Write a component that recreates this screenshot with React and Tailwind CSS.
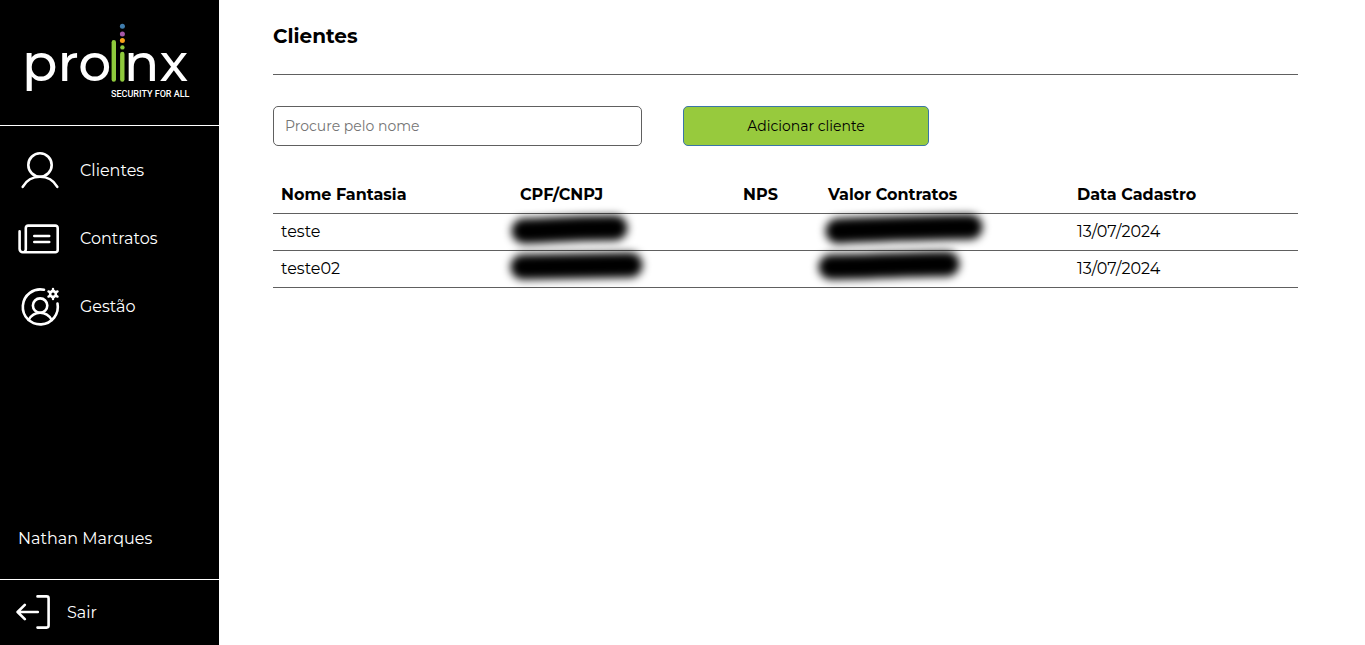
import React from "react";

const navItems = [
  { label: "Clientes", Icon: UserIcon },
  { label: "Contratos", Icon: ContractIcon },
  { label: "Gestão", Icon: ManagementIcon },
];

const columns = [
  { label: "Nome Fantasia", width: "w-[239px]" },
  { label: "CPF/CNPJ", width: "w-[223px]" },
  { label: "NPS", width: "w-[85px]" },
  { label: "Valor Contratos", width: "w-[249px]" },
  { label: "Data Cadastro", width: "w-[229px]" },
];

const clients = [
  {
    name: "teste",
    document: "M28 25 C50 25 66 22 119 22",
    value: "M34 25 C70 23 100 22 166 21",
    date: "13/07/2024",
  },
  {
    name: "teste02",
    document: "M27 24 L134 22",
    value: "M27 24 C66 24 100 21 143 21",
    date: "13/07/2024",
  },
];

function Logo() {
  return (
    <svg
      width="168"
      height="78"
      viewBox="25 22 168 78"
      className="overflow-visible"
      role="img"
      aria-label="prolinx security for all"
    >
      <g fill="#fff" fontFamily="Montserrat, Inter, sans-serif" fontSize="52" fontWeight="500">
        <text x="22" y="81">pro</text>
        <text x="124" y="81">nx</text>
      </g>
      <g stroke="#8fca3c" strokeWidth="4.4" strokeLinecap="round">
        <line x1="113.8" y1="42.3" x2="113.8" y2="79.5" />
        <line x1="122.3" y1="54" x2="122.3" y2="79.5" />
      </g>
      <circle cx="122.4" cy="26.2" r="2.5" fill="#3f7cac" />
      <circle cx="122.4" cy="33.9" r="2.5" fill="#a657a8" />
      <circle cx="122.4" cy="40.6" r="2.5" fill="#f9a11b" />
      <circle cx="122.4" cy="47.4" r="2.2" fill="#8fca3c" />
      <text x="111" y="97" fill="#fff" fontFamily="Roboto, sans-serif" fontSize="9" fontWeight="500">
        SECURITY FOR ALL
      </text>
    </svg>
  );
}

function LineIcon({ size, children }) {
  return (
    <svg
      width={size}
      height={size}
      viewBox={`0 0 ${size} ${size}`}
      fill="none"
      stroke="currentColor"
      strokeWidth="2.6"
      strokeLinecap="round"
      strokeLinejoin="round"
      className="shrink-0"
      aria-hidden="true"
    >
      {children}
    </svg>
  );
}

function UserIcon() {
  return (
    <LineIcon size={44}>
      <circle cx="22" cy="17" r="11.7" />
      <path d="M4.7 38.8 C8.2 32.8 14.5 28.8 22 28.8 S35.8 32.8 39.3 38.8" />
    </LineIcon>
  );
}

function ContractIcon() {
  return (
    <LineIcon size={44}>
      <path d="M1.6 15.4 V33 A3.2 3.2 0 0 0 4.8 36.2 H37.4 A2.3 2.3 0 0 0 39.7 33.9 V11.9 A2.3 2.3 0 0 0 37.4 9.6 H10.1 A2.3 2.3 0 0 0 7.8 11.9 V33.2 A3 3 0 0 1 4.8 36.2" />
      <path d="M16.3 20 H31.2 M16.3 26 H31.2" />
    </LineIcon>
  );
}

function ManagementIcon() {
  return (
    <LineIcon size={44}>
      <path d="M26 5.8 A17.5 17.5 0 1 0 39.5 19.6" />
      <circle cx="22.1" cy="21.6" r="7.2" />
      <path d="M10.6 36 C13 31.6 17 28.8 22.1 28.8 S31.3 31.6 33.7 36" />
      <circle cx="35" cy="10" r="2.9" strokeWidth="2.6" />
      <path
        strokeWidth="2.4"
        d="M35 6.5 V5 M35 13.5 V15 M38 8.3 L39.5 7.4 M38 11.7 L39.5 12.6 M32 8.3 L30.5 7.4 M32 11.7 L30.5 12.6"
      />
    </LineIcon>
  );
}

function ExitIcon() {
  return (
    <LineIcon size={34}>
      <path d="M21.5 1.4 H30.6 A2 2 0 0 1 32.6 3.4 V30.6 A2 2 0 0 1 30.6 32.6 H21.5" />
      <path d="M21.8 17 H1.8 M8.8 9.8 L1.6 17 L8.8 24.2" />
    </LineIcon>
  );
}

function Redacted({ stroke }) {
  return (
    <svg
      width="200"
      height="52"
      viewBox="0 0 200 52"
      className="pointer-events-none absolute -top-2 -left-4 max-w-none overflow-visible"
      role="img"
      aria-label="Dado oculto"
    >
      <path d={stroke} fill="none" stroke="#000" strokeWidth="25" strokeLinecap="round" className="blur-[4px]" />
    </svg>
  );
}

function Sidebar() {
  return (
    <aside className="flex w-[219px] shrink-0 flex-col bg-black leading-normal text-white">
      <div className="border-b border-white px-[25px] pt-[22px] pb-[25px]">
        <Logo />
      </div>
      <nav className="flex flex-col gap-6 px-[18px] pt-[22px] leading-[25px]">
        {navItems.map(({ label, Icon }) => (
          <a key={label} href="#" className="flex items-center gap-[18px]">
            <Icon />
            {label}
          </a>
        ))}
      </nav>
      <p className="mt-auto px-[18px] pb-7 leading-6">Nathan Marques</p>
      <div className="border-t border-white px-4 pt-[15px] pb-4">
        <button type="button" className="flex items-center gap-[17px] leading-[25px]">
          <ExitIcon />
          Sair
        </button>
      </div>
    </aside>
  );
}

function ClientTable() {
  return (
    <table className="mt-[31px] w-full table-fixed border-separate border-spacing-0 text-left">
      <thead>
        <tr>
          {columns.map(({ label, width }) => (
            <th key={label} scope="col" className={`${width} border-b border-[#606060] px-2 py-1.5 font-bold`}>
              {label}
            </th>
          ))}
        </tr>
      </thead>
      <tbody>
        {clients.map((client) => (
          <tr key={client.name}>
            <td className="border-b border-[#606060] px-2 py-1.5">{client.name}</td>
            <td className="relative border-b border-[#606060] px-2 py-1.5">
              <Redacted stroke={client.document} />
            </td>
            <td className="border-b border-[#606060] px-2 py-1.5" />
            <td className="relative border-b border-[#606060] px-2 py-1.5">
              <Redacted stroke={client.value} />
            </td>
            <td className="border-b border-[#606060] px-2 py-1.5">{client.date}</td>
          </tr>
        ))}
      </tbody>
    </table>
  );
}

export default function App() {
  return (
    <div className="flex min-h-screen bg-white font-[Montserrat,Inter,sans-serif] text-base text-black">
      <Sidebar />
      <main className="min-w-0 flex-1 pt-6 pr-[67px] pl-[54px]">
        <h1 className="border-b border-[#606060] pb-[26px] text-xl leading-6 font-bold">Clientes</h1>
        <div className="mt-[31px] flex gap-[4%]">
          <input
            type="text"
            aria-label="Procure pelo nome"
            placeholder="Procure pelo nome"
            className="h-10 w-[36%] rounded-[5px] border border-[#606060] px-[11px] text-sm placeholder:text-[#757575]"
          />
          <button
            type="button"
            className="h-10 w-[24%] rounded-[5px] border border-[#3a75a8] bg-[#97ca3d] text-sm"
          >
            Adicionar cliente
          </button>
        </div>
        <ClientTable />
      </main>
    </div>
  );
}
